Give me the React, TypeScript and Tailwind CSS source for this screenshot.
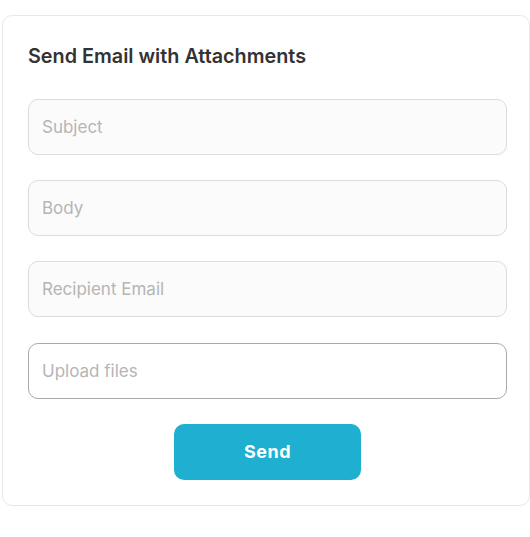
export default function App() {
  const fields = [
    { name: 'subject', placeholder: 'Subject' },
    { name: 'body', placeholder: 'Body' },
    { name: 'recipient', placeholder: 'Recipient Email' },
  ]

  return (
    <div className="w-[530px] h-[537px] bg-white pt-[15px] pl-[2px] font-['Inter',sans-serif]">
      <div className="w-[528px] h-[491px] border border-[#e8e8e8] rounded-[10px] bg-white px-[25px] pt-[26px]">
        <h2 className="text-[19.8px] leading-[28px] font-semibold text-[#333333] mb-[29px]">
          Send Email with Attachments
        </h2>

        <form className="flex flex-col gap-[25.2px] w-[479px]" onSubmit={(e) => e.preventDefault()}>
          {fields.map((f) => (
            <input
              key={f.name}
              name={f.name}
              placeholder={f.placeholder}
              className="h-[56px] rounded-[10px] border border-[#dcdcdc] bg-[#fbfbfb] px-[13px] text-[17px] text-[#333] placeholder:text-[#b5b5b5] outline-none"
            />
          ))}
          <input
            name="files"
            placeholder="Upload files"
            className="h-[56px] rounded-[10px] border border-[#a9a9a9] bg-white px-[13px] text-[17px] text-[#333] placeholder:text-[#b5b5b5] outline-none"
          />
          <div className="flex justify-center">
            <button
              type="submit"
              className="w-[187px] h-[56px] rounded-[10px] bg-[#1eafd1] text-white text-[18px] font-bold tracking-[0.5px]"
            >
              Send
            </button>
          </div>
        </form>
      </div>
    </div>
  )
}
